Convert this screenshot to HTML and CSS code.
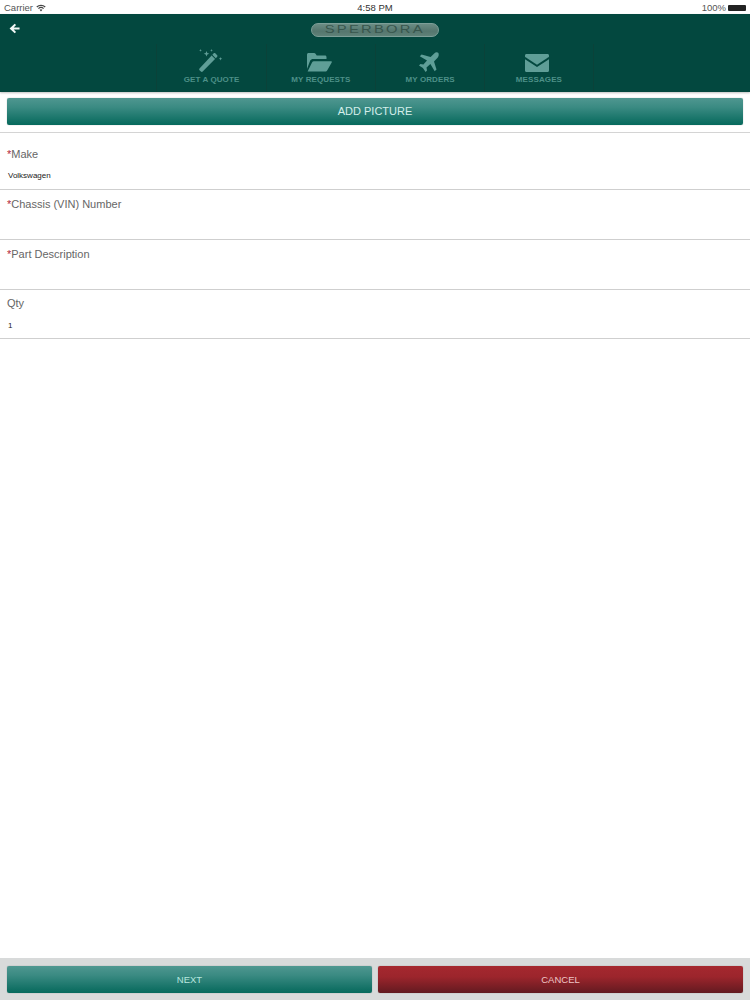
FILE: index.html
```html
<!DOCTYPE html>
<html lang="en">
<head>
<meta charset="utf-8">
<title>Sperbora</title>
<link rel="stylesheet" href="styles.css">
</head>
<body>
<div class="page">
  <div class="status">
    <div class="status-left">
      <span>Carrier</span>
      <svg class="wifi" viewBox="0 0 12 9" width="10" height="8"><path d="M6 8.6 4.3 6.7a2.5 2.5 0 0 1 3.4 0ZM3.4 5.8 2.4 4.7a5.3 5.3 0 0 1 7.2 0l-1 1.1a3.9 3.9 0 0 0-5.2 0ZM1.5 3.8.4 2.7a8.2 8.2 0 0 1 11.2 0l-1.1 1.1a6.7 6.7 0 0 0-9 0Z"/></svg>
    </div>
    <span class="status-time">4:58 PM</span>
    <div class="status-right">
      <span>100%</span>
      <span class="battery"></span>
    </div>
  </div>

  <header class="header">
    <div class="topbar">
      <svg class="back" viewBox="0 0 12 12" width="11" height="11"><path d="M6.2.8 7.7 2.300 5.100 4.800H11.500V7.200H5.100L7.700 9.700 6.200 11.200.6 6Z"/></svg>
      <div class="logo"><span>SPERBORA</span></div>
    </div>
    <nav class="nav">
      <a class="nav-item">
        <svg class="nav-icon" viewBox="0 0 26 24" width="26" height="24"><path d="M2.500 20.500 16.500 5.500c.6-.6 1.400-.6 2 0l1.500 1.400c.6.600.6 1.400 0 2L5.700 23.500c-.5.500-1.300.5-1.800 0L2.500 22.200c-.5-.5-.5-1.200 0-1.700Z"/><path class="wand-band" d="m14.600 7.500 3.800 3.800.7-.7-3.800-3.800Z"/><path d="m9.500 3 .8 2 2 .8-2 .8-.8 2-.8-2-2-.8 2-.8ZM3.500 1l.4 1 1 .4-1 .4-.4 1-.4-1-1-.4 1-.4ZM23.500 9l.5 1.300 1.300.5-1.300.5-.5 1.300-.5-1.300-1.300-.5 1.300-.5ZM14.500 1l.4 1 1 .4-1 .4-.4 1-.4-1-1-.4 1-.4Z"/></svg>
        <span>GET A QUOTE</span>
      </a>
      <a class="nav-item">
        <svg class="nav-icon" viewBox="0 0 26 20" width="26" height="20"><path d="M1 17V2.500C1 1.700 1.700 1 2.500 1H8c.8 0 1.300.4 1.700 1l1 1.500H19c.8 0 1.500.7 1.500 1.500v2H7c-1.200 0-2.200.6-2.800 1.600Z"/><path d="M1.600 19.500 6 10.500c.4-.8 1.100-1.200 2-1.200h17c.7 0 1 .5.700 1.100L21.300 18.300c-.4.800-1.200 1.200-2 1.200Z"/></svg>
        <span>MY REQUESTS</span>
      </a>
      <a class="nav-item">
        <svg class="nav-icon" viewBox="0 0 20 20" width="20" height="20"><path d="M19.200.8c-.9-.9-2.800-.6-4 .6L11.600 5 2.600 2.500.8 4.300 8 8.600l-3.600 3.900-3-.5L0 13.400l3.900 2.700L6.600 20l1.400-1.400-.5-3 3.900-3.600 4.300 7.200 1.800-1.800L15 9.400l3.600-3.600c1.200-1.200 1.500-4.100.6-5Z"/></svg>
        <span>MY ORDERS</span>
      </a>
      <a class="nav-item">
        <svg class="nav-icon" viewBox="0 0 24 18" width="24" height="18"><path d="M1.500 0h21C23.400 0 24 .6 24 1.500v.7c0 .5-.2.800-.6 1.100L12 10.700.6 3.300C.2 3 0 2.700 0 2.200v-.7C0 .6.600 0 1.500 0Z"/><path d="M0 5.200 12 13 24 5.200v11.300c0 .9-.6 1.500-1.500 1.500h-21C.6 18 0 17.400 0 16.500Z"/></svg>
        <span>MESSAGES</span>
      </a>
    </nav>
  </header>

  <div class="picture-bar">
    <button class="btn btn-teal btn-wide">ADD PICTURE</button>
  </div>

  <main class="form">
    <div class="field field-first">
      <div class="label"><span class="req">*</span>Make</div>
      <div class="value">Volkswagen</div>
    </div>
    <div class="field">
      <div class="label"><span class="req">*</span>Chassis (VIN) Number</div>
      <div class="value"></div>
    </div>
    <div class="field">
      <div class="label"><span class="req">*</span>Part Description</div>
      <div class="value"></div>
    </div>
    <div class="field field-last">
      <div class="label">Qty</div>
      <div class="value">1</div>
    </div>
  </main>

  <footer class="footer">
    <button class="btn btn-teal btn-next">NEXT</button>
    <button class="btn btn-red">CANCEL</button>
  </footer>
</div>
</body>
</html>
```

FILE: styles.css
```css
* { box-sizing: border-box; }
html, body { margin: 0; padding: 0; }
body {
  font-family: "Liberation Sans", Arial, sans-serif;
  background: #fff;
  color: #555;
}
.page {
  width: 750px;
  height: 1000px;
  display: flex;
  flex-direction: column;
  overflow: hidden;
}
.status {
  height: 14px;
  display: grid;
  grid-template-columns: 1fr auto 1fr;
  align-items: center;
  padding: 1px 4px 0;
  font-size: 9.500px;
  color: #333;
  background: #fff;
}
.status-left { display: flex; align-items: center; gap: 3px; color: #555; }
.wifi { fill: #444; }
.status-time { font-weight: 400; color: #333; }
.status-right { display: flex; align-items: center; justify-content: flex-end; gap: 2px; color: #555; }
.battery {
  width: 18px;
  height: 6px;
  background: #222;
  border-radius: 1px;
}
.header {
  height: 78px;
  background: #03483f;
  display: flex;
  flex-direction: column;
  box-shadow: 0 1px 2px rgba(0, 0, 0, .25);
}
.topbar {
  height: 30px;
  position: relative;
  display: flex;
  align-items: center;
  justify-content: center;
}
.back { position: absolute; left: 9px; top: 9px; fill: #f2f7f6; }
.logo {
  width: 128px;
  height: 14px;
  border-radius: 7px;
  border: 1px solid #7d9f98;
  background: linear-gradient(#6b8d85, #55766e 60%, #5f8178);
  display: flex;
  align-items: center;
  justify-content: center;
  margin-top: 1px;
}
.logo span {
  font-size: 10px;
  line-height: 1;
  letter-spacing: 1.500px;
  color: #38564d;
  transform: scaleX(1.480);
}
.nav {
  flex: 1;
  display: flex;
  justify-content: center;
}
.nav-item {
  width: 109.300px;
  border-left: 1px solid #0a4239;
  display: flex;
  flex-direction: column;
  align-items: center;
  justify-content: flex-end;
  gap: 3px;
  padding-bottom: 8px;
  font-size: 8px;
  font-weight: 700;
  letter-spacing: .1px;
  color: #4d9088;
}
.nav-item:last-child { border-right: 1px solid #0a4239; }
.nav-icon { fill: #5f9e97; margin-right: 3px; }
.wand-band { fill: #03483f; }
.picture-bar {
  height: 41px;
  padding: 6px 7px 0;
  border-bottom: 1px solid #d4d4d4;
  flex: none;
}
.btn {
  border: 0;
  margin: 0;
  padding: 0;
  height: 27px;
  border-radius: 2px;
  font-family: inherit;
  font-size: 9.500px;
  color: #b8e6df;
  box-shadow: 0 0 1px rgba(0, 0, 0, .45);
}
.btn-teal { background: linear-gradient(#4f9790, #3a8a82 35%, #06695c); }
.btn-red { background: linear-gradient(#a5282f, #9c252c 40%, #631a20); color: #eec6c6; flex: 1; }
.btn-wide { width: 100%; font-size: 11px; padding-bottom: 2px; color: #d4eeea; }
.btn-next { flex: 1; }
.form { flex: 1; }
.field {
  height: 50px;
  padding: 7px 7px 0;
  border-bottom: 1px solid #cfcfcf;
}
.field-first { height: 57px; padding-top: 14px; }
.field-last { height: 49px; padding-top: 6px; }
.label {
  font-size: 11px;
  line-height: 14px;
  color: #666;
}
.req { color: #b3263a; }
.value {
  margin: 10px 0 0 1px;
  font-size: 8px;
  line-height: 10px;
  height: 10px;
  color: #222;
}
.field-last .value { margin-top: 11px; }
.footer {
  flex: none;
  height: 42px;
  background: #d8dada;
  padding: 8px 7px 7px;
  display: flex;
  gap: 6px;
}
```
